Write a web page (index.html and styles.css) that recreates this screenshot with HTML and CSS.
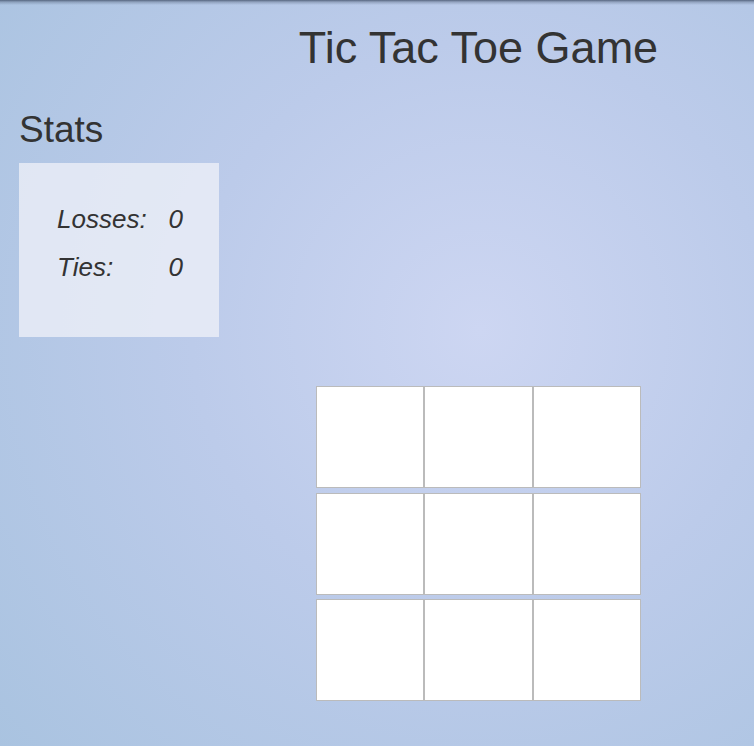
FILE: index.html
```html
<!DOCTYPE html>
<html lang="en">
<head>
<meta charset="utf-8">
<title>Tic Tac Toe Game</title>
<link rel="stylesheet" href="styles.css">
</head>
<body>
<div class="page">
  <aside class="sidebar">
    <h2 class="stats-title">Stats</h2>
    <div class="stats-box">
      <span class="stat-label">Losses:</span><span class="stat-value">0</span>
      <span class="stat-label">Ties:</span><span class="stat-value">0</span>
    </div>
  </aside>
  <main class="main">
    <h1 class="title">Tic Tac Toe Game</h1>
    <div class="board">
      <div class="row"><div class="cell"></div><div class="cell"></div><div class="cell"></div></div>
      <div class="row"><div class="cell"></div><div class="cell"></div><div class="cell"></div></div>
      <div class="row"><div class="cell"></div><div class="cell"></div><div class="cell"></div></div>
    </div>
  </main>
</div>
</body>
</html>
```
FILE: styles.css
```css
html, body {
  margin: 0;
  padding: 0;
  height: 100%;
}
body {
  font-family: "Liberation Sans", Arial, sans-serif;
  color: #333;
  background:
    linear-gradient(to bottom, rgba(70, 85, 110, 0.85) 0, rgba(90, 105, 130, 0.4) 2px, rgba(120, 135, 160, 0) 5px),
    radial-gradient(circle 640px at 480px 330px, #cdd6f2 0%, #bccbea 45%, #a9c3e0 100%);
  overflow: hidden;
}
.page {
  display: grid;
  grid-template-columns: 219px 519px;
  height: 746px;
}
.sidebar {
  padding: 109px 0 0 19px;
}
.stats-title {
  margin: 0 0 12px;
  font-size: 37px;
  font-weight: normal;
  line-height: 42px;
}
.stats-box {
  width: 200px;
  height: 174px;
  box-sizing: border-box;
  padding: 32px 0 0 38px;
  background: rgba(240, 242, 248, 0.75);
  display: grid;
  grid-template-columns: auto auto;
  justify-content: start;
  column-gap: 22px;
  align-content: start;
}
.stat-label, .stat-value {
  font-size: 26px;
  font-style: italic;
  line-height: 48px;
}
.main {
  display: flex;
  flex-direction: column;
  align-items: center;
}
.title {
  margin: 23px 0 0;
  font-size: 45px;
  font-weight: normal;
  line-height: 50px;
  white-space: nowrap;
}
.board {
  margin-top: 313px;
  width: 325px;
  display: flex;
  flex-direction: column;
  gap: 4.5px;
}
.row {
  display: flex;
}
.cell {
  flex: 1;
  height: 102px;
  box-sizing: border-box;
  border: 1px solid #bbb;
  background: #fff;
}
```
